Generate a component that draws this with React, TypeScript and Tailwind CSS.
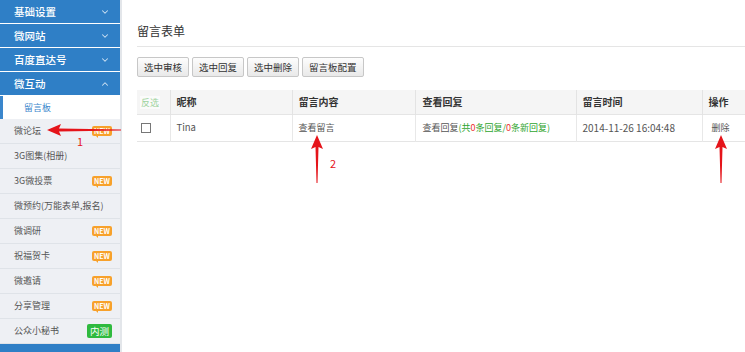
import { ChevronDown, ChevronUp } from "lucide-react";

const font = { fontFamily: '"Microsoft YaHei", "Noto Sans CJK SC", "Liberation Sans", sans-serif' };

const groups = [
  { name: "基础设置", open: false },
  { name: "微网站", open: false },
  { name: "百度直达号", open: false },
  { name: "微互动", open: true },
];

const items: { name: string; badge?: "new" | "beta" }[] = [
  { name: "微论坛", badge: "new" },
  { name: "3G图集(相册)" },
  { name: "3G微投票", badge: "new" },
  { name: "微预约(万能表单,报名)" },
  { name: "微调研", badge: "new" },
  { name: "祝福贺卡", badge: "new" },
  { name: "微邀请", badge: "new" },
  { name: "分享管理", badge: "new" },
  { name: "公众小秘书", badge: "beta" },
];

function NewBadge() {
  return (
    <span className="relative flex h-[10px] items-center rounded-[2px] bg-[#f7a12b] px-[2px] text-[7px] font-bold leading-none text-white">
      NEW
      <span className="absolute -bottom-[2px] left-[3px] h-0 w-0 border-l-[3px] border-t-[3px] border-l-transparent border-t-[#f7a12b]" />
    </span>
  );
}

function Sidebar() {
  return (
    <div className="flex w-[122px] shrink-0 flex-col border-r-2 border-[#e3e6ea] bg-white">
      {groups.map((g) => (
        <div
          key={g.name}
          className="mb-px flex h-[23px] items-center justify-between bg-[#2f7fc6] pl-[14px] pr-[10px] text-[10.5px] font-medium text-white"
        >
          <span>{g.name}</span>
          {g.open ? (
            <ChevronUp size={10} strokeWidth={2.5} className="text-[#cfe2f3]" />
          ) : (
            <ChevronDown size={10} strokeWidth={2.5} className="text-[#cfe2f3]" />
          )}
        </div>
      ))}
      <div className="flex h-[23px] items-center border-l-[3px] border-[#3a86cc] bg-white pl-[21px] text-[9px] text-[#3a86cc]">
        留言板
      </div>
      {items.map((it) => (
        <div
          key={it.name}
          className="flex h-[25px] items-center justify-between border-b border-[#dfe3e8] bg-[#eef0f4] pl-[14px] pr-[8px] text-[9px] text-[#555]"
        >
          <span className="whitespace-nowrap">{it.name}</span>
          {it.badge === "new" && <NewBadge />}
          {it.badge === "beta" && (
            <span className="rounded-[2px] bg-[#2fba3f] px-[3px] text-[9.5px] leading-[14px] text-white">内测</span>
          )}
        </div>
      ))}
      <div className="h-[8px] bg-[#2f7fc6]" />
    </div>
  );
}

function Btn({ children }: { children: string }) {
  return (
    <button className="h-[20px] rounded-[2px] border border-[#c7c7c7] bg-gradient-to-b from-[#fdfdfd] to-[#e9e9e9] px-[6px] text-[9.5px] text-[#333]">
      {children}
    </button>
  );
}

function UpArrow() {
  return (
    <svg width="12" height="48" viewBox="0 0 12 48">
      <polygon points="6,0 12,14 7.5,12 6.5,48 5.5,48 4.5,12 0,14" fill="#e5141a" />
    </svg>
  );
}

export default function App() {
  return (
    <div className="relative flex h-[352px] w-[745px] overflow-hidden bg-white" style={font}>
      <Sidebar />
      <div className="flex flex-1 flex-col pl-[15px]">
        <div className="mt-[22px] border-b border-[#e5e5e5] pb-[6px] text-[12px] leading-[18px] text-[#333]">留言表单</div>
        <div className="mt-[10px] flex gap-[3px]">
          <Btn>选中审核</Btn>
          <Btn>选中回复</Btn>
          <Btn>选中删除</Btn>
          <Btn>留言板配置</Btn>
        </div>
        <table className="mt-[13px] w-full border-collapse text-[9px] text-[#555]">
          <thead>
            <tr className="h-[24px] bg-[#f5f5f5] text-left text-[10px] font-bold text-[#333]">
              <th className="w-[33px] border-r border-[#e3e3e3] pl-[3px] font-normal">
                <span className="bg-[#fbfbfb] px-[1px] text-[9px] text-[#9ed39e]">反选</span>
              </th>
              <th className="w-[122px] border-r border-[#e3e3e3] pl-[6px]">昵称</th>
              <th className="w-[123px] border-r border-[#e3e3e3] pl-[6px]">留言内容</th>
              <th className="w-[161px] border-r border-[#e3e3e3] pl-[7px]">查看回复</th>
              <th className="w-[126px] border-r border-[#e3e3e3] pl-[6px]">留言时间</th>
              <th className="pl-[6px]">操作</th>
            </tr>
          </thead>
          <tbody>
            <tr className="h-[27px] border-b border-t border-[#e5e5e5]">
              <td className="border-r border-[#e8e8e8] pl-[4px]">
                <span className="block h-[10px] w-[10px] border border-[#777] bg-white" />
              </td>
              <td className="border-r border-[#e8e8e8] pl-[6px] text-[9.5px]">Tina</td>
              <td className="border-r border-[#e8e8e8] pl-[6px]">查看留言</td>
              <td className="border-r border-[#e8e8e8] pl-[7px]">
                查看回复
                <span className="text-[#2ea52e]">
                  (共<span className="text-[#e33]">0</span>条回复/<span className="text-[#e33]">0</span>条新回复)
                </span>
              </td>
              <td className="border-r border-[#e8e8e8] pl-[6px] text-[10px]">2014-11-26 16:04:48</td>
              <td className="pl-[9px]">删除</td>
            </tr>
          </tbody>
        </table>
      </div>

      {/* annotation arrows */}
      <svg className="absolute left-[47px] top-[124px]" width="74" height="12" viewBox="0 0 74 12">
        <polygon points="0,6 14,0 12,4.5 74,5.5 74,6.5 12,7.5 14,12" fill="#e5141a" />
      </svg>
      <span className="absolute left-[77px] top-[133px] text-[11px] text-[#e5141a]">1</span>
      <div className="absolute left-[311px] top-[135px]">
        <UpArrow />
      </div>
      <span className="absolute left-[330px] top-[155px] text-[11px] text-[#e5141a]">2</span>
      <div className="absolute left-[715px] top-[135px]">
        <UpArrow />
      </div>
    </div>
  );
}
